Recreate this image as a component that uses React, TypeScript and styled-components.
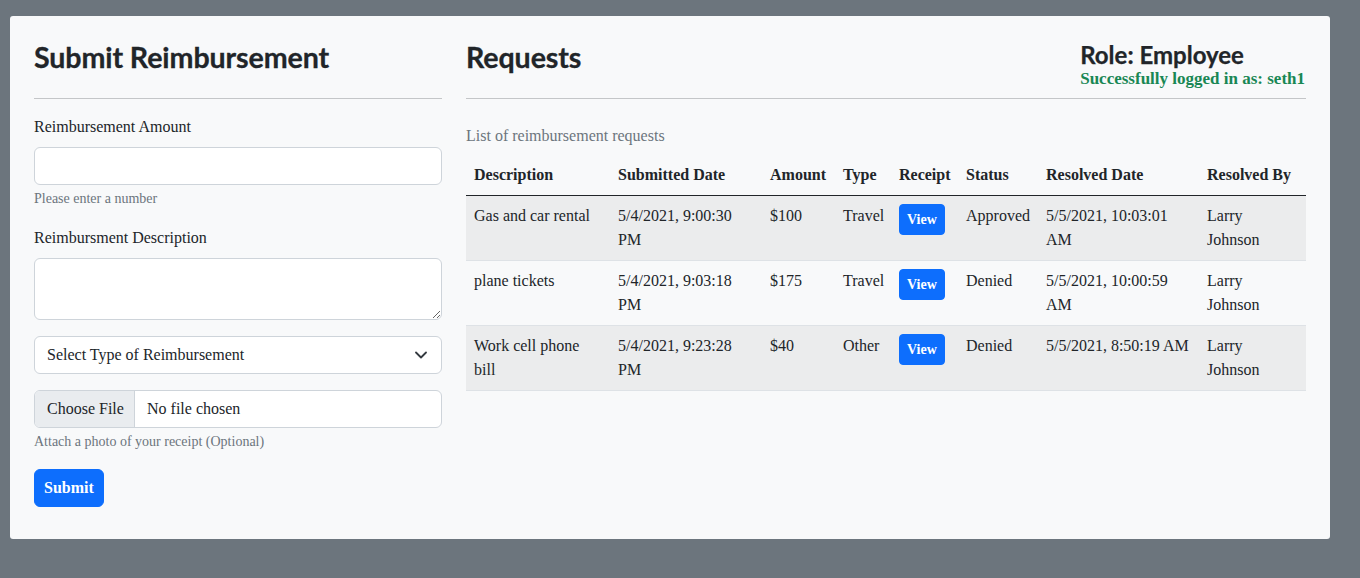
import React from "react";
import styled, { createGlobalStyle } from "styled-components";

const Global = createGlobalStyle`
  html, body { margin: 0; padding: 0; }
  body {
    background: #6c757d;
    font-family: "Liberation Serif", "Times New Roman", serif;
    font-size: 16px;
    line-height: 1.5;
    color: #212529;
  }
  * { box-sizing: border-box; }
`;

const Page = styled.div`
  padding: 16px 30px 39px 10px;
`;

const Card = styled.div`
  width: 1320px;
  background: #f8f9fa;
  border-radius: 3px;
  padding: 24px 24px 32px 24px;
  display: grid;
  grid-template-columns: 408px 840px;
  column-gap: 24px;
`;

const Column = styled.section`
  display: flex;
  flex-direction: column;
`;

const HeaderRow = styled.div`
  display: flex;
  justify-content: space-between;
  align-items: flex-start;
  height: 58px;
`;

const Heading = styled.h2`
  margin: 0;
  font-family: "Lato", "Open Sans", sans-serif;
  font-weight: 700;
  font-size: 28.6px;
  line-height: 34px;
  letter-spacing: -0.1px;
  -webkit-text-stroke: 0.3px #212529;
`;

const RoleBlock = styled.div`
  display: flex;
  flex-direction: column;
  align-items: flex-start;
  padding-top: 1px;
  margin-right: 1px;
`;

const RoleTitle = styled.h3`
  margin: 0;
  font-family: "Lato", "Open Sans", sans-serif;
  font-weight: 700;
  font-size: 24px;
  line-height: 28px;
  -webkit-text-stroke: 0.25px #212529;
`;

const LoggedIn = styled.div`
  color: #198754;
  font-weight: 700;
  font-size: 17px;
  line-height: 20px;
`;

const Rule = styled.hr`
  margin: 0 0 16px 0;
  border: 0;
  border-top: 1px solid #c4c6c8;
  height: 0;
`;

const Group = styled.div<{ $gap?: number }>`
  display: flex;
  flex-direction: column;
  margin-bottom: ${(p) => p.$gap ?? 16}px;
`;

const Label = styled.label`
  display: block;
  margin-bottom: 8px;
  line-height: 24px;
  padding-top: 1px;
  margin-top: -1px;
`;

const fieldBase = `
  width: 100%;
  display: block;
  font-family: "Liberation Serif", "Times New Roman", serif;
  font-size: 16px;
  line-height: 24px;
  color: #212529;
  background: #fff;
  border: 1px solid #ced4da;
  border-radius: 6px;
  padding: 6px 12px;
  outline: none;
`;

const TextInput = styled.input`
  ${fieldBase}
  height: 38px;
`;

const TextArea = styled.textarea`
  ${fieldBase}
  height: 62px;
  resize: vertical;
`;

const SelectWrap = styled.div`
  position: relative;
`;

const Select = styled.select`
  ${fieldBase}
  height: 38px;
  appearance: none;
  -webkit-appearance: none;
  padding-right: 36px;
`;

const Chevron = styled.svg`
  position: absolute;
  right: 15px;
  top: 15px;
  pointer-events: none;
`;

const FileBox = styled.label`
  display: flex;
  height: 38px;
  border: 1px solid #ced4da;
  border-radius: 6px;
  background: #fff;
  overflow: hidden;
  cursor: pointer;
  input { display: none; }
`;

const FileButton = styled.span`
  display: flex;
  align-items: center;
  padding: 0 12px;
  width: 100px;
  background: #e9ecef;
  border-right: 1px solid #ced4da;
  white-space: nowrap;
`;

const FileName = styled.span`
  display: flex;
  align-items: center;
  padding-left: 12px;
`;

const Help = styled.div`
  margin-top: 4px;
  font-size: 14px;
  line-height: 20px;
  color: #6c757d;
`;

const PrimaryButton = styled.button<{ $small?: boolean }>`
  font-family: "Liberation Serif", "Times New Roman", serif;
  font-weight: 700;
  color: #fff;
  background: #0d6efd;
  border: 1px solid #0d6efd;
  border-radius: ${(p) => (p.$small ? 4 : 6)}px;
  font-size: ${(p) => (p.$small ? 14 : 16)}px;
  line-height: ${(p) => (p.$small ? 21 : 24)}px;
  padding: ${(p) => (p.$small ? "4px 7px" : "6px 9px")};
  cursor: pointer;
  align-self: flex-start;
`;

const Table = styled.table`
  width: 840px;
  border-collapse: collapse;
  table-layout: fixed;
  caption-side: top;
`;

const Caption = styled.caption`
  text-align: left;
  color: #6c757d;
  padding: 9px 0 7px;
  line-height: 24px;
`;

const Th = styled.th`
  text-align: left;
  font-weight: 700;
  padding: 8px;
  line-height: 24px;
  vertical-align: bottom;
  border-bottom: 1px solid #212529;
`;

const Tr = styled.tr<{ $striped: boolean }>`
  background: ${(p) => (p.$striped ? "#ebeced" : "transparent")};
  border-bottom: 1px solid #dee2e6;
`;

const Td = styled.td`
  padding: 8px;
  line-height: 24px;
  vertical-align: top;
`;

const widths = [144, 152, 73, 56, 67, 80, 161, 107];
const headers = [
  "Description",
  "Submitted Date",
  "Amount",
  "Type",
  "Receipt",
  "Status",
  "Resolved Date",
  "Resolved By",
];

const rows = [
  {
    desc: "Gas and car rental",
    submitted: "5/4/2021, 9:00:30 PM",
    amount: "$100",
    type: "Travel",
    status: "Approved",
    resolved: "5/5/2021, 10:03:01 AM",
    by: "Larry Johnson",
  },
  {
    desc: "plane tickets",
    submitted: "5/4/2021, 9:03:18 PM",
    amount: "$175",
    type: "Travel",
    status: "Denied",
    resolved: "5/5/2021, 10:00:59 AM",
    by: "Larry Johnson",
  },
  {
    desc: "Work cell phone bill",
    submitted: "5/4/2021, 9:23:28 PM",
    amount: "$40",
    type: "Other",
    status: "Denied",
    resolved: "5/5/2021, 8:50:19 AM",
    by: "Larry Johnson",
  },
];

export default function App() {
  return (
    <Page>
      <Global />
      <Card>
        <Column>
          <HeaderRow>
            <Heading>Submit Reimbursement</Heading>
          </HeaderRow>
          <Rule />
          <Group $gap={17}>
            <Label htmlFor="amt">Reimbursement Amount</Label>
            <TextInput id="amt" type="text" />
            <Help>Please enter a number</Help>
          </Group>
          <Group>
            <Label htmlFor="desc">Reimbursment Description</Label>
            <TextArea id="desc" />
          </Group>
          <Group>
            <SelectWrap>
              <Select defaultValue="">
                <option value="">Select Type of Reimbursement</option>
                <option value="travel">Travel</option>
                <option value="other">Other</option>
              </Select>
              <Chevron width="12" height="8" viewBox="0 0 12 8">
                <path d="M1 1.5l5 5 5-5" fill="none" stroke="#343a40" strokeWidth="1.8" strokeLinecap="round" strokeLinejoin="round" />
              </Chevron>
            </SelectWrap>
          </Group>
          <Group $gap={17}>
            <FileBox>
              <input type="file" />
              <FileButton>Choose File</FileButton>
              <FileName>No file chosen</FileName>
            </FileBox>
            <Help>Attach a photo of your receipt (Optional)</Help>
          </Group>
          <PrimaryButton>Submit</PrimaryButton>
        </Column>
        <Column>
          <HeaderRow>
            <Heading>Requests</Heading>
            <RoleBlock>
              <RoleTitle>Role: Employee</RoleTitle>
              <LoggedIn>Successfully logged in as: seth1</LoggedIn>
            </RoleBlock>
          </HeaderRow>
          <Rule />
          <Table>
            <Caption>List of reimbursement requests</Caption>
            <colgroup>
              {widths.map((w, i) => (
                <col key={i} style={{ width: w }} />
              ))}
            </colgroup>
            <thead>
              <tr>
                {headers.map((h) => (
                  <Th key={h}>{h}</Th>
                ))}
              </tr>
            </thead>
            <tbody>
              {rows.map((r, i) => (
                <Tr key={i} $striped={i % 2 === 0}>
                  <Td>{r.desc}</Td>
                  <Td>{r.submitted}</Td>
                  <Td>{r.amount}</Td>
                  <Td>{r.type}</Td>
                  <Td>
                    <PrimaryButton $small>View</PrimaryButton>
                  </Td>
                  <Td>{r.status}</Td>
                  <Td>{r.resolved}</Td>
                  <Td>{r.by}</Td>
                </Tr>
              ))}
            </tbody>
          </Table>
        </Column>
      </Card>
    </Page>
  );
}
